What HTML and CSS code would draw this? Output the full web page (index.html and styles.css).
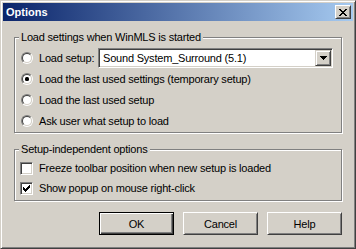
FILE: index.html
```html
<!DOCTYPE HTML>
<html>
<head>
  <title>Options</title>
  <meta name="viewport" content="width=device-width, initial-scale=1">
  <link rel="stylesheet" href="styles.css">
</head>
<body>

<div class="window">
  <div class="titlebar">
    <span class="title">Options</span>
    <span class="close">
      <svg width="8" height="7" viewBox="0 0 8 7" shape-rendering="crispEdges"><path d="M0 0h2v1h-2z M6 0h2v1h-2z M1 1h2v1h-2z M5 1h2v1h-2z M2 2h4v1h-4z M3 3h2v1h-2z M2 4h4v1h-4z M1 5h2v1h-2z M5 5h2v1h-2z M0 6h2v1h-2z M6 6h2v1h-2z" fill="#000"/></svg>
    </span>
  </div>

  <div class="content">
    <div class="group group-load">
      <span class="legend">Load settings when WinMLS is started</span>
      <div class="row">
        <span class="radio"><span class="radio-in"></span></span>
        <span class="label label-setup">Load setup:</span>
        <div class="combo">
          <span class="combo-text">Sound System_Surround (5.1)</span>
          <span class="combo-btn">
            <svg width="7" height="4" viewBox="0 0 7 4" shape-rendering="crispEdges"><path d="M0 0h7v1h-7z M1 1h5v1h-5z M2 2h3v1h-3z M3 3h1v1h-1z" fill="#000"/></svg>
          </span>
        </div>
      </div>
      <div class="row">
        <span class="radio"><span class="radio-in"><span class="dot"></span></span></span>
        <span class="label">Load the last used settings (temporary setup)</span>
      </div>
      <div class="row">
        <span class="radio"><span class="radio-in"></span></span>
        <span class="label">Load the last used setup</span>
      </div>
      <div class="row">
        <span class="radio"><span class="radio-in"></span></span>
        <span class="label">Ask user what setup to load</span>
      </div>
    </div>

    <div class="group group-setup">
      <span class="legend">Setup-independent options</span>
      <div class="row row-check">
        <span class="check"></span>
        <span class="label">Freeze toolbar position when new setup is loaded</span>
      </div>
      <div class="row row-check">
        <span class="check">
          <svg width="7" height="7" viewBox="0 0 7 7" shape-rendering="crispEdges"><path d="M6 0h1v1h-1z M5 1h2v1h-2z M0 2h1v1h-1z M4 2h3v1h-3z M0 3h2v1h-2z M3 3h3v1h-3z M0 4h5v1h-5z M1 5h3v1h-3z M2 6h1v1h-1z" fill="#000"/></svg>
        </span>
        <span class="label">Show popup on mouse right-click</span>
      </div>
    </div>

    <div class="buttons">
      <button class="btn btn-default"><span>OK</span></button>
      <button class="btn"><span>Cancel</span></button>
      <button class="btn"><span>Help</span></button>
    </div>
  </div>
</div>

</body>
</html>
```

FILE: styles.css
```css
body {
  margin: 0;
  font-family: "Liberation Sans", Arial, sans-serif;
  font-size: 11px;
  letter-spacing: -0.2px;
  color: #000;
}

.window {
  width: 356px;
  height: 249px;
  box-sizing: border-box;
  background-color: #d4d0c8;
  border: 1px solid;
  border-color: #d4d0c8 #404040 #404040 #d4d0c8;
  box-shadow: inset 1px 1px 0 #fff, inset -1px -1px 0 #808080;
  padding: 2px;
}

.titlebar {
  height: 18px;
  display: flex;
  align-items: center;
  justify-content: space-between;
  background: linear-gradient(to right, #0a246a, #a6caf0);
  padding: 0 2px 0 3px;
}

.title {
  color: #fff;
  font-weight: bold;
  font-size: 11px;
  letter-spacing: 0;
}

.close {
  width: 16px;
  height: 14px;
  box-sizing: border-box;
  background-color: #d4d0c8;
  border: 1px solid;
  border-color: #fff #404040 #404040 #fff;
  box-shadow: inset 1px 1px 0 #d4d0c8, inset -1px -1px 0 #808080;
  display: flex;
  align-items: center;
  justify-content: center;
}

.close svg {
  display: block;
}

.content {
  padding: 16px 0 0 11px;
}

.group {
  width: 328px;
  box-sizing: border-box;
  border: 1px solid #808080;
  box-shadow: inset 1px 1px 0 #fff, 1px 1px 0 #fff;
}

.group-load {
  height: 96px;
}

.group-setup {
  height: 52px;
  margin-top: 16px;
}

.legend {
  display: table;
  line-height: 13px;
  margin: -7px 0 3px 4px;
  padding: 0 2px 0 2px;
  background-color: #d4d0c8;
}

.group-setup .legend {
  margin-bottom: 2px;
}

.row {
  display: flex;
  align-items: center;
  height: 21px;
  padding-left: 6px;
}

.row-check {
  height: 20px;
  padding-left: 5px;
}

.label {
  margin-left: 6px;
  white-space: nowrap;
}

.label-setup {
  width: 59px;
}

.radio {
  width: 12px;
  height: 12px;
  box-sizing: border-box;
  border-radius: 50%;
  border: 1px solid;
  border-color: #808080 #fff #fff #808080;
  display: flex;
  flex-shrink: 0;
}

.radio-in {
  flex: 1;
  border-radius: 50%;
  border: 1px solid;
  border-color: #404040 #d4d0c8 #d4d0c8 #404040;
  background-color: #fff;
  display: flex;
  align-items: center;
  justify-content: center;
}

.dot {
  width: 4px;
  height: 4px;
  border-radius: 1.5px;
  background-color: #000;
}

.check {
  width: 13px;
  height: 13px;
  box-sizing: border-box;
  flex-shrink: 0;
  border: 1px solid;
  border-color: #808080 #fff #fff #808080;
  box-shadow: inset 1px 1px 0 #404040, inset -1px -1px 0 #d4d0c8;
  background-color: #fff;
  display: flex;
  align-items: center;
  justify-content: center;
}

.check svg {
  display: block;
}

.combo {
  width: 235px;
  height: 20px;
  box-sizing: border-box;
  margin-top: 1px;
  border: 1px solid;
  border-color: #808080 #fff #fff #808080;
  box-shadow: inset 1px 1px 0 #404040, inset -1px -1px 0 #d4d0c8;
  background-color: #fff;
  padding: 1px;
  display: flex;
  align-items: center;
}

.combo-text {
  flex: 1;
  padding-left: 3px;
  white-space: nowrap;
}

.combo-btn {
  width: 16px;
  height: 16px;
  box-sizing: border-box;
  background-color: #d4d0c8;
  border: 1px solid;
  border-color: #d4d0c8 #404040 #404040 #d4d0c8;
  box-shadow: inset 1px 1px 0 #fff, inset -1px -1px 0 #808080;
  display: flex;
  align-items: center;
  justify-content: center;
}

.combo-btn svg {
  display: block;
}

.buttons {
  width: 328px;
  display: flex;
  justify-content: flex-end;
  gap: 9px;
  margin-top: 11px;
}

.btn {
  width: 75px;
  height: 23px;
  box-sizing: border-box;
  margin: 0;
  padding: 0;
  font-family: inherit;
  font-size: 11px;
  letter-spacing: inherit;
  color: #000;
  background-color: #d4d0c8;
  border: 1px solid;
  border-color: #fff #404040 #404040 #fff;
  box-shadow: inset 1px 1px 0 #d4d0c8, inset -1px -1px 0 #808080;
  display: flex;
  align-items: center;
  justify-content: center;
}

.btn-default {
  border: 1px solid #000;
  box-shadow: inset 1px 1px 0 #fff, inset -1px -1px 0 #404040, inset -2px -2px 0 #808080;
}
```
